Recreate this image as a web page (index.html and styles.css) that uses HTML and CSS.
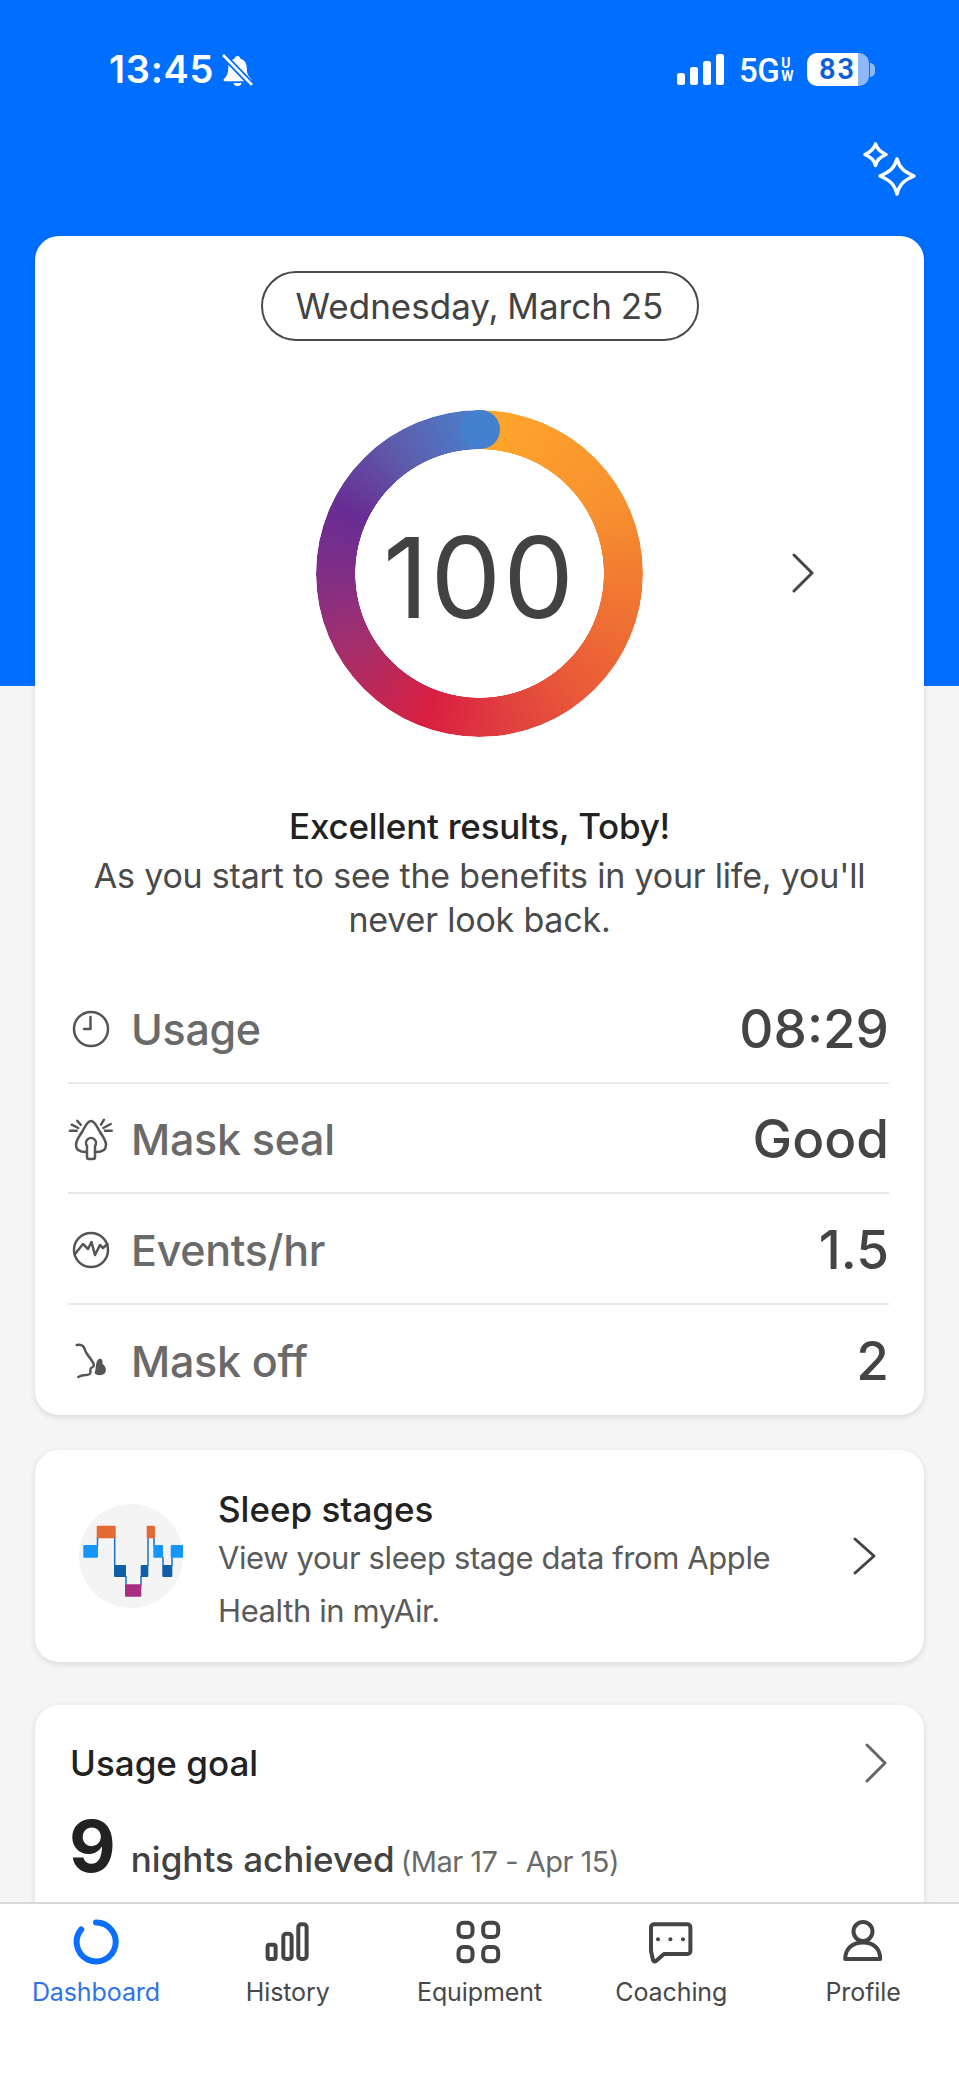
FILE: index.html
```html
<!DOCTYPE html>
<html lang="en">
<head>
<meta charset="utf-8">
<title>myAir Dashboard</title>
<link rel="stylesheet" href="styles.css">
</head>
<body>
<div class="app">
  <main class="main">
    <header class="status">
      <div class="status-left">
        <span class="time">13:45</span>
        <svg class="bell" viewBox="2 0 30 32" aria-hidden="true">
          <path d="M17 2c-1.500 0-2.500 1-2.700 2.400C10 5.800 8 9.500 8 14c0 5-1.500 7.500-4 10-1 1-.5 2.500 1 2.500h24c1.500 0 2-1.500 1-2.500-2.500-2.500-4-5-4-10 0-4.500-2-8.200-6.300-9.600C19.500 3 18.500 2 17 2z" fill="#fff"/>
          <path d="M13 28h8c-.5 2-2 3-4 3s-3.500-1-4-3z" fill="#fff"/>
          <path d="M3 1l28 29" stroke="#006eff" stroke-width="6"/>
          <path d="M3 1l28 29" stroke="#fff" stroke-width="2.600"/>
        </svg>
      </div>
      <div class="status-right">
        <svg class="signal" viewBox="0 0 48 31" aria-hidden="true">
          <rect x="0" y="19" width="8" height="12" rx="2.500"/>
          <rect x="13" y="13" width="8" height="18" rx="2.500"/>
          <rect x="26" y="7" width="8" height="24" rx="2.500"/>
          <rect x="39" y="0" width="8" height="31" rx="2.500"/>
        </svg>
        <span class="net">5G<span class="net-sup"><span>U</span><span>W</span></span></span>
        <span class="battery"><span class="battery-body">83</span><span class="battery-rest"></span></span><span class="battery-tip"></span>
      </div>
    </header>
    <div class="sparkle-row">
      <svg class="sparkle" viewBox="0 0 56 56" aria-hidden="true">
        <path d="M13.500 3c1.500 5 4 7.500 10.500 10.500C17.500 16.500 15 19 13.500 24.500 12 19 9.500 16.500 3 13.500 9.500 10.500 12 8 13.500 3z"/>
        <path d="M35 18c2.500 8.500 6.500 12.500 17 17-10.500 4.500-14.500 8.500-17 18-2.500-9.500-6.500-13.500-17-18 10.500-4.500 14.500-8.500 17-17z"/>
      </svg>
    </div>

    <section class="card score-card">
      <div class="date-pill">Wednesday, March 25</div>
      <div class="ring-row">
        <div class="ring">
          <div class="ring-band"></div>
          <div class="ring-cap"></div>
          <div class="ring-value">100</div>
        </div>
        <svg class="chev chev-ring" viewBox="0 0 24 40" aria-hidden="true"><path d="M2 2l18 18L2 38"/></svg>
      </div>
      <p class="headline">Excellent results, Toby!</p>
      <p class="message">As you start to see the benefits in your life, you'll<br>never look back.</p>
      <ul class="stats">
        <li class="stat">
          <svg class="stat-icon" viewBox="0 0 40 40" aria-hidden="true"><circle cx="20" cy="20" r="17"/><path d="M19.500 8v12H13"/></svg>
          <span class="stat-label">Usage</span><span class="stat-value">08:29</span>
        </li>
        <li class="stat">
          <svg class="stat-icon" viewBox="0 0 40 40" aria-hidden="true">
            <path d="M15 33C9 33 5 31 5 26 5 21 8 18 11 13 14 8 16 2 20 2s6 6 9 11c3 5 6 8 6 13 0 5-4 7-10 7"/>
            <path d="M16 27V38q0 2 2 2h4q2 0 2-2V27A5 5 0 1 0 16 27z"/>
            <path d="M6.300 1.700l3.400 4M.7 5.700L7.300 9M-1 11.700h6.700M33 .7l-3 5M39.700 5l-7.400 4M40.700 11.700H34"/>
          </svg>
          <span class="stat-label">Mask seal</span><span class="stat-value">Good</span>
        </li>
        <li class="stat">
          <svg class="stat-icon" viewBox="0 0 40 40" aria-hidden="true"><circle cx="20" cy="20" r="17"/><path d="M4 24l8-10 5 5 3.500-7L24 25l5-10 3 3 4.500-4"/></svg>
          <span class="stat-label">Events/hr</span><span class="stat-value">1.5</span>
        </li>
        <li class="stat">
          <svg class="stat-icon" viewBox="0 0 40 40" aria-hidden="true">
            <path d="M5.700 4C10 3 13 5 14 9c1 4 4 6 7 11 2 3 3 5 0 6.500-2 1-2 1.500-1.500 3.500.5 3-1.500 4-4.500 4-3 0-6 1-7.700 2"/>
            <path class="solid" d="M28 18c3-1 4 2 3.500 5 3 2 4.500 6 2.500 9-3 3-8 3-10.500 0 2-4 .5-12 4.500-14z"/>
          </svg>
          <span class="stat-label">Mask off</span><span class="stat-value">2</span>
        </li>
      </ul>
    </section>

    <section class="card sleep-card">
      <svg class="sleep-icon" viewBox="0 0 104 104" aria-hidden="true">
        <circle cx="52" cy="52" r="52" fill="#f4f4f4"/>
        <path d="M18.500 33V42M35.700 33V62M47 72V82M62 72V82M69 33V62M75 33V42M84 53V62M93 53V62" stroke="#1b72c0" stroke-width="1.500" fill="none"/>
        <rect x="4.300" y="41" width="14.700" height="12.700" rx="1" fill="#1596ff"/>
        <rect x="17.700" y="21.700" width="19" height="12.600" rx="1" fill="#e46a34"/>
        <rect x="67.700" y="21.700" width="8.300" height="12.600" rx="1" fill="#e46a34"/>
        <rect x="74.300" y="41" width="9.700" height="12.700" rx="1" fill="#1596ff"/>
        <rect x="91.700" y="41" width="12.600" height="12.700" rx="1" fill="#1596ff"/>
        <rect x="35" y="61" width="12" height="12" rx="1" fill="#0f5ea8"/>
        <rect x="61.700" y="61" width="7.600" height="12" rx="1" fill="#0f5ea8"/>
        <rect x="83.300" y="61" width="10" height="12" rx="1" fill="#0f5ea8"/>
        <rect x="46" y="80.300" width="16.300" height="12.400" rx="1" fill="#a82e82"/>
      </svg>
      <div class="sleep-text">
        <h2 class="sleep-title">Sleep stages</h2>
        <p class="sleep-desc">View your sleep stage data from Apple<br>Health in myAir.</p>
      </div>
      <svg class="chev chev-sleep" viewBox="0 0 28 40" aria-hidden="true"><path d="M4 3l19 17L4 37"/></svg>
    </section>

    <section class="card goal-card">
      <div class="goal-head">
        <h2 class="goal-title">Usage goal</h2>
        <svg class="chev chev-goal" viewBox="0 0 24 40" aria-hidden="true"><path d="M2 2l18 18L2 38"/></svg>
      </div>
      <p class="goal-line"><span class="goal-num">9</span><span class="goal-text">nights achieved</span><span class="goal-range">(Mar 17 - Apr 15)</span></p>
    </section>
  </main>

  <nav class="nav">
    <div class="tab tab-active">
      <svg class="tab-icon" viewBox="0 0 48 48" aria-hidden="true"><path class="dash" d="M9.200 11.500A19.500 19.500 0 1 0 24 4.500"/></svg>
      <span class="tab-label">Dashboard</span>
    </div>
    <div class="tab">
      <svg class="tab-icon" viewBox="0 0 48 48" aria-hidden="true"><rect x="3.600" y="26.700" width="8" height="14.300" rx="2"/><rect x="19.300" y="15.700" width="8.300" height="25.300" rx="3"/><rect x="34.300" y="6.300" width="8.300" height="34.700" rx="3"/></svg>
      <span class="tab-label">History</span>
    </div>
    <div class="tab">
      <svg class="tab-icon" viewBox="0 0 48 48" aria-hidden="true"><rect x="3.500" y="4.700" width="14" height="14.300" rx="5"/><rect x="28.200" y="4.700" width="15" height="14.300" rx="5"/><rect x="3.500" y="29" width="14" height="14.300" rx="5"/><rect x="28.200" y="29" width="15" height="14.300" rx="5"/></svg>
      <span class="tab-label">Equipment</span>
    </div>
    <div class="tab">
      <svg class="tab-icon" viewBox="0 0 48 48" aria-hidden="true"><path d="M7 6.300h33.400a3 3 0 0 1 3 3V33a3 3 0 0 1-3 3H17l-8 7c-1 .8-2.500.5-3-1L4 33V9.300a3 3 0 0 1 3-3z"/><circle class="dot" cx="11" cy="21.300" r="2"/><circle class="dot" cx="23.400" cy="21.300" r="2"/><circle class="dot" cx="36" cy="21.300" r="2"/></svg>
      <span class="tab-label">Coaching</span>
    </div>
    <div class="tab">
      <svg class="tab-icon" viewBox="0 0 48 48" aria-hidden="true"><circle cx="24" cy="13.500" r="9.500"/><path d="M6.200 41C6.200 31 13 24.500 24 24.500S41.200 31 41.200 41z"/></svg>
      <span class="tab-label">Profile</span>
    </div>
  </nav>
</div>
</body>
</html>
```

FILE: styles.css
```css
* { box-sizing: border-box; }
html, body { margin: 0; padding: 0; }
body { font-family: "Inter", "Liberation Sans", sans-serif; color: #222; }
p, h2, ul { margin: 0; padding: 0; font-weight: 400; }
ul { list-style: none; }

.app { width: 959px; height: 2084px; display: flex; flex-direction: column; overflow: hidden; background: linear-gradient(#006eff 686px, #f5f5f5 686px); }
.main { flex: 1; min-height: 0; overflow: hidden; padding: 0 35px; }

.status { height: 104px; padding: 47px 0 0 74px; margin-right: -35px; display: flex; justify-content: space-between; color: #fff; }
.status-left { display: flex; align-items: flex-start; }
.time { font-family: "Inter", sans-serif; font-weight: 600; font-size: 38px; line-height: 44px; letter-spacing: .7px; }
.bell { width: 31px; height: 33px; margin: 7px 0 0 8px; }
.status-right { display: flex; align-items: center; height: 33px; margin-top: 6px; padding-right: 84px; }
.signal { width: 48px; height: 31px; fill: #fff; margin-right: 14px; }
.net { display: flex; font-family: "Roboto", sans-serif; font-weight: 500; font-size: 33px; line-height: 36px; letter-spacing: -.5px; margin: 3px 14px 0 0; }
.net-sup { display: flex; flex-direction: column; font-size: 14px; line-height: 13px; margin: 4px 0 0 2px; font-weight: 700; }
.battery { display: flex; height: 33px; border-radius: 10px; overflow: hidden; }
.battery-body { width: 51px; padding-left: 12px; background: #fff; color: #0c5fdc; font-family: "Roboto", sans-serif; font-weight: 600; font-size: 29px; line-height: 33px; letter-spacing: 2px; overflow: hidden; }
.battery-rest { width: 11px; background: #8db8f5; }
.battery-tip { width: 5px; height: 14px; margin-left: 1px; background: #8db8f5; border-radius: 0 5px 5px 0; }

.sparkle-row { height: 132px; display: flex; justify-content: flex-end; padding: 37px 6px 0 0; }
.sparkle { width: 56px; height: 56px; fill: none; stroke: #fff; stroke-width: 3.500; stroke-linejoin: round; }

.card { background: #fff; border-radius: 24px; box-shadow: 0 2px 6px rgba(0,0,0,.12); }

.score-card { height: 1179px; padding: 35px 35px 0; display: flex; flex-direction: column; align-items: center; }
.date-pill { width: 438px; height: 72px; border: 2px solid #4a4a4a; border-radius: 36px; display: flex; align-items: center; justify-content: center; font-size: 35px; color: #424242; word-spacing: -1px; }
.ring-row { position: relative; width: 327px; margin-top: 69px; }
.ring { position: relative; width: 327px; height: 327px; }
.ring-band { width: 100%; height: 100%; border-radius: 50%; background: conic-gradient(#ffa62b 0deg, #f8922f 60deg, #f07632 100deg, #e95a38 140deg, #e03f3f 170deg, #d91f41 200deg, #a42f6c 240deg, #7f2f86 270deg, #682c93 295deg, #5f5aaa 325deg, #4a80cc 360deg); -webkit-mask: radial-gradient(circle, transparent 124px, #000 124.500px); mask: radial-gradient(circle, transparent 124px, #000 124.500px); }
.ring-cap { position: absolute; left: 145px; top: 0; width: 39px; height: 39px; border-radius: 50%; background: #4381cf; }
.ring-value { position: absolute; inset: 0; padding: 6px 0 0 0; display: flex; align-items: center; justify-content: center; font-family: "Inter", sans-serif; font-weight: 400; font-size: 112px; letter-spacing: 2px; color: #424242; }
.chev { fill: none; stroke: #444; stroke-width: 3; stroke-linecap: round; stroke-linejoin: round; }
.chev-ring { position: absolute; left: 476px; top: 143px; width: 24px; height: 40px; }

.headline { margin-top: 67px; font-size: 35px; line-height: 44px; font-weight: 500; color: #222; text-align: center; letter-spacing: -.25px; }
.message { margin-top: 6px; font-size: 34px; line-height: 44px; color: #4a4a4a; text-align: center; letter-spacing: -.2px; }

.stats { width: calc(100% + 2px); margin: 31px 0 0 -2px; }
.stat { height: 110.5px; padding-top: 3px; display: flex; align-items: center; border-bottom: 2px solid #e9e9e9; }
.stat:last-child { border-bottom: 0; }
.stat-icon { width: 40px; height: 40px; flex: none; overflow: visible; fill: none; stroke: #555; stroke-width: 2.500; stroke-linecap: round; stroke-linejoin: round; margin: 0 20px 0 3px; }
.stat-icon .solid { fill: #555; stroke: none; }
.stat-label { flex: 1; font-size: 43px; font-weight: 500; color: #6a6a6a; letter-spacing: -.3px; }
.stat-value { font-size: 53px; font-weight: 500; color: #444; }

.sleep-card { height: 212px; margin-top: 35px; padding: 0 45px 0 44px; display: flex; align-items: center; }
.sleep-icon { width: 104px; height: 104px; flex: none; margin-right: 35px; }
.sleep-text { flex: 1; padding-top: 12px; }
.sleep-title { font-size: 35px; line-height: 44px; font-weight: 500; color: #222; }
.sleep-desc { font-size: 31px; line-height: 53px; color: #5a5a5a; letter-spacing: -.4px; }
.chev-sleep { width: 28px; height: 40px; }

.goal-card { margin-top: 43px; height: 300px; padding: 36px 35px 0; }
.goal-head { display: flex; justify-content: space-between; align-items: center; }
.goal-title { font-size: 35px; line-height: 44px; font-weight: 500; color: #222; }
.chev-goal { width: 24px; height: 40px; stroke: #666; }
.goal-line { display: flex; align-items: baseline; margin-top: 19px; }
.goal-num { font-size: 72px; line-height: 84px; font-weight: 700; color: #222; margin-right: 15px; margin-left: -1px; }
.goal-text { font-size: 35px; font-weight: 500; color: #424242; margin-right: 6px; }
.goal-range { font-size: 29px; color: #6a6a6a; letter-spacing: -.5px; }

.nav { height: 182px; flex: none; background: #fff; border-top: 2px solid #d8d8d8; display: grid; grid-template-columns: repeat(5, 1fr); }
.tab { display: flex; flex-direction: column; align-items: center; padding-top: 14px; }
.tab-icon { width: 48px; height: 48px; fill: none; stroke: #444; stroke-width: 4; stroke-linecap: round; stroke-linejoin: round; }
.tab-icon .dot { fill: #444; stroke: none; }
.tab-icon .dash { stroke: #0a6eff; stroke-width: 6; }
.tab-label { margin-top: 10px; font-size: 25px; line-height: 32px; color: #484848; letter-spacing: -.1px; }
.tab-active .tab-label { color: #2f73e6; }
```
